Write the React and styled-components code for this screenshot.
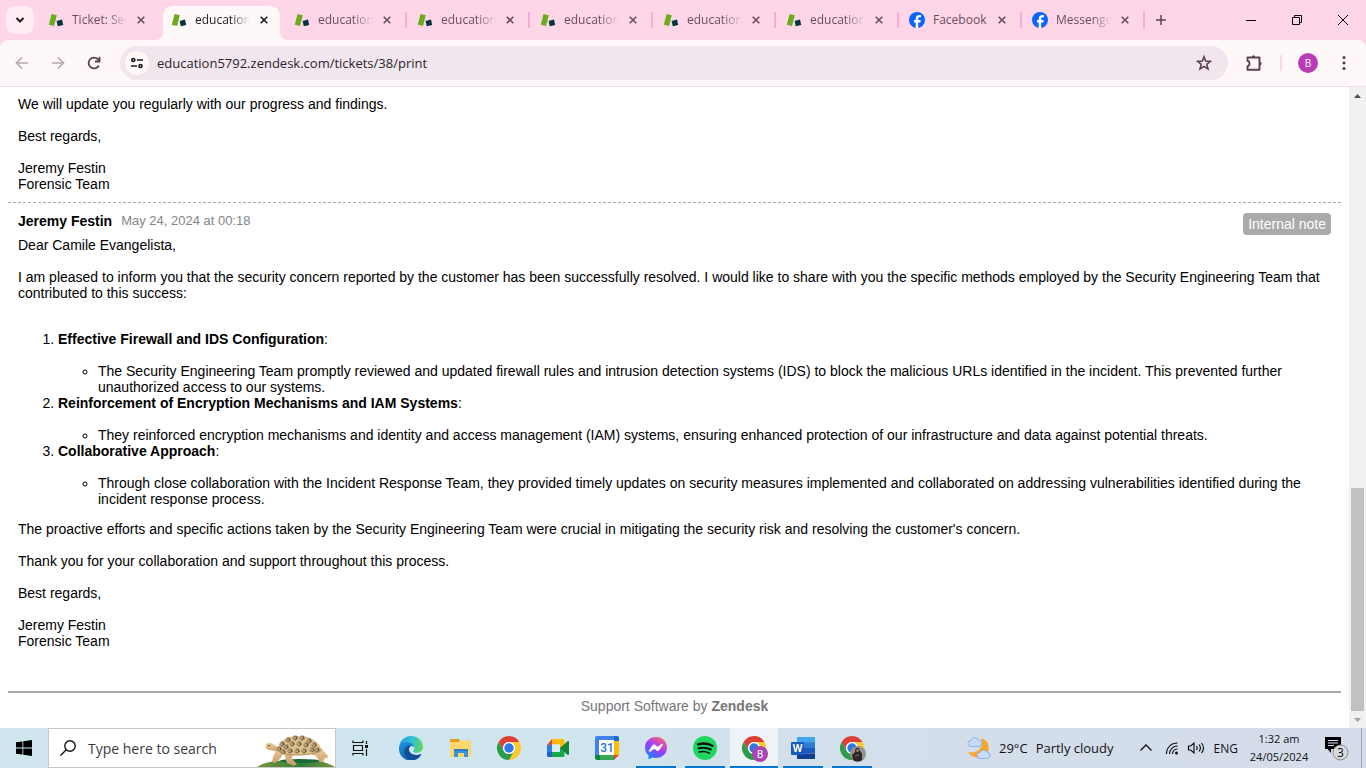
import React from "react";
import styled, { createGlobalStyle, css } from "styled-components";

const GlobalStyle = createGlobalStyle`
  *, *::before, *::after { box-sizing: border-box; }
  body { margin: 0; overflow: hidden; font-family: "Liberation Sans", Arial, sans-serif; }
  button { border: 0; padding: 0; background: none; font: inherit; color: inherit; }
  input { border: 0; padding: 0; background: none; outline: 0; min-width: 0; }
  a { color: inherit; text-decoration: none; }
  svg { display: block; flex: none; }
`;

const uiFont = css`
  font-family: "Open Sans", "Noto Sans", sans-serif;
`;

const Screen = styled.div`
  display: flex;
  flex-direction: column;
  height: 100vh;
  overflow: hidden;
  background: #fff;
`;

/* ---------- Tab strip ---------- */

const TabStrip = styled.header`
  ${uiFont}
  display: flex;
  flex: none;
  height: 40px;
  background: #ffd6e7;
  color: #5f4554;
`;

const TabSearch = styled.button`
  display: grid;
  place-items: center;
  flex: none;
  width: 28px;
  height: 28px;
  margin: 6px 4px 0 6px;
  border-radius: 9px;
  background: #ffebf4;
  color: #1f1a1d;
`;

const TabList = styled.nav`
  display: flex;
`;

const TabBox = styled.div`
  position: relative;
  display: flex;
  align-items: flex-start;
  flex: none;
  width: 123px;
  height: 34px;
  margin-top: 6px;
  padding-left: 10px;
  color: ${(p) => (p.$active ? "#1f1a1d" : "#6b4e5d")};

  ${(p) =>
    p.$divider &&
    css`
      &::after {
        content: "";
        position: absolute;
        right: 0;
        top: 6px;
        width: 2px;
        height: 16px;
        border-radius: 1px;
        background: #fba9d9;
      }
    `}
`;

const TabShape = styled.svg`
  position: absolute;
  left: -6px;
  top: 0;
`;

const TabContent = styled.a`
  position: relative;
  display: flex;
  align-items: center;
  gap: 8px;
  height: 28px;
`;

const TabTitle = styled.span`
  width: 55px;
  white-space: nowrap;
  font-size: 12px;
  line-height: 16px;
  mask-image: ${(p) => (p.$full ? "none" : "linear-gradient(90deg, #000 65%, transparent)")};
`;

const TabClose = styled.button`
  position: relative;
  display: grid;
  place-items: center;
  width: 16px;
  height: 28px;
  margin-left: 6px;
`;

const NewTab = styled.button`
  display: grid;
  place-items: center;
  width: 32px;
  height: 40px;
`;

const WindowControls = styled.div`
  display: flex;
  margin-left: auto;
  color: #000;
`;

const WindowButton = styled.button`
  display: grid;
  place-items: center;
  width: 46px;
  height: 40px;
`;

/* ---------- Toolbar ---------- */

const ToolbarBack = styled.div`
  ${uiFont}
  flex: none;
  background: #ffd6e7;
`;

const Toolbar = styled.div`
  display: flex;
  align-items: center;
  height: 47px;
  padding: 0 4px;
  border-bottom: 1px solid #f5dce8;
  border-radius: 8px 8px 0 0;
  background: #fff8f9;
  color: #5b4050;
`;

const ToolButton = styled.button`
  display: grid;
  place-items: center;
  flex: none;
  width: 36px;
  height: 34px;
  color: ${(p) => (p.$dim ? "#b4aaae" : "#5b4050")};
`;

const AddressBar = styled.div`
  display: flex;
  align-items: center;
  flex: 1;
  height: 34px;
  margin: 0 8px;
  padding: 0 6px 0 5px;
  border-radius: 17px;
  background: #f2e6ee;
`;

const SiteInfo = styled.button`
  display: grid;
  place-items: center;
  width: 24px;
  height: 24px;
  margin-right: 8px;
  border-radius: 50%;
  background: #fff8f9;
  color: #1f1a1d;
`;

const UrlInput = styled.input`
  ${uiFont}
  flex: 1;
  height: 24px;
  font-size: 13px;
  color: #2b2529;
`;

const ToolDivider = styled.span`
  width: 2px;
  height: 16px;
  margin: 0 8px;
  background: #ffd6e7;
`;

const Profile = styled.button`
  display: grid;
  place-items: center;
  width: 20px;
  height: 20px;
  margin: 0 8px;
  border-radius: 50%;
  background: #b83cb8;
  color: #fff;
  font-size: 10px;
  line-height: 20px;
`;

/* ---------- Page ---------- */

const Viewport = styled.div`
  display: flex;
  flex: 1;
  min-height: 0;
`;

const Page = styled.main`
  flex: 1;
  min-width: 0;
  overflow: hidden;
  padding: 0 8px;
  font-size: 14px;
  line-height: 16px;
  color: #000;
`;

const Comment = styled.article`
  padding: ${(p) => (p.$continued ? "9px 10px 10px" : "10px 10px 42px")};
  border-top: ${(p) => (p.$continued ? "0" : "1px dashed #aaa")};
`;

const CommentHead = styled.header`
  display: flex;
  align-items: flex-start;
  gap: 9px;
  height: 24px;
`;

const Author = styled.strong`
  font-weight: bold;
`;

const Stamp = styled.time`
  font-size: 13px;
  color: #858585;
`;

const NoteBadge = styled.span`
  margin-left: auto;
  padding: 3px 5px;
  border-radius: 4px;
  background: #aaa;
  color: #fff;
`;

const Para = styled.p`
  margin: 0 0 ${(p) => (p.$last ? "0" : "16px")};
`;

const Steps = styled.ol`
  margin: 30px 0 14px;
  padding-left: 40px;
`;

const StepTitle = styled.p`
  margin: 0 0 16px;
`;

const Details = styled.ul`
  margin: 0;
  padding-left: 40px;
  list-style: circle;
`;

const PageFooter = styled.footer`
  padding-top: 5px;
  border-top: 2px solid #aaa;
  text-align: center;
  color: #777;
`;

const ScrollTrack = styled.div`
  display: flex;
  flex-direction: column;
  justify-content: flex-end;
  flex: none;
  width: 17px;
  background: #f1f1f1;
`;

const ScrollArrow = styled.button`
  display: grid;
  place-items: center;
  width: 17px;
  height: 17px;
  color: ${(p) => (p.$dim ? "#a3a3a3" : "#505050")};
`;

const ScrollArea = styled.div`
  display: flex;
  flex-direction: column;
  justify-content: flex-end;
  flex: 1;
  padding: 0 2px;
`;

const ScrollThumb = styled.div`
  height: 223px;
  background: #c1c1c1;
`;

/* ---------- Taskbar ---------- */

const Taskbar = styled.footer`
  ${uiFont}
  display: flex;
  flex: none;
  height: 40px;
  background: linear-gradient(90deg, #cfe6ee 0%, #d0e6ee 38%, #d3dfeb 60%, #d5dcea 100%);
  color: #111;
`;

const TaskButton = styled.button`
  position: relative;
  display: grid;
  place-items: center;
  flex: none;
  width: 48px;
  height: 40px;
  background: ${(p) => (p.$active ? "#edf3f8" : "none")};

  ${(p) =>
    p.$open &&
    css`
      &::after {
        content: "";
        position: absolute;
        left: ${p.$active ? "0" : "4px"};
        right: ${p.$active ? "0" : "4px"};
        bottom: 0;
        height: 2px;
        background: #0078d7;
      }
    `}
`;

const SearchBox = styled.label`
  display: flex;
  align-items: center;
  width: 288px;
  height: 40px;
  padding-left: 11px;
  border: 1px solid #c8c8c8;
  background: #fff;
`;

const SearchInput = styled.input`
  ${uiFont}
  flex: 1;
  height: 30px;
  margin-left: 12px;
  font-size: 14px;
  &::placeholder { color: #3b3b3b; opacity: 1; }
`;

const AppRow = styled.div`
  display: flex;
  gap: 1px;
  margin-left: 3px;
`;

const Tray = styled.div`
  display: flex;
  align-items: center;
  margin-left: auto;
`;

const Weather = styled.button`
  display: flex;
  align-items: center;
  gap: 8px;
  margin-right: 26px;
  font-size: 13px;
  white-space: nowrap;
`;

const TrayButton = styled.button`
  display: grid;
  place-items: center;
  height: 40px;
  margin-right: ${(p) => p.$gap || 8}px;
  font-size: 12px;
`;

const Clock = styled.time`
  width: 64px;
  margin-right: 14px;
  font-size: 11px;
  line-height: 18px;
  text-align: center;
  white-space: nowrap;
`;

const ShowDesktop = styled.button`
  width: 5px;
  height: 40px;
  border-left: 1px solid #9aa5b5;
`;

/* ---------- Icons ---------- */

const Line = ({ size = 16, w = 2, children, ...rest }) => (
  <svg width={size} height={size} viewBox={`0 0 ${size} ${size}`} fill="none" stroke="currentColor" strokeWidth={w} {...rest}>
    {children}
  </svg>
);

const ZendeskTabIcon = () => (
  <svg width="16" height="16" viewBox="0 0 16 16">
    <path d="M3.600 2 8.800 3.200 6 14 .8 12.800z" fill="#6cab1c" />
    <path d="m8.600 8.900 5.400-1.300 1.200 5.400-5.400 1.200z" fill="#03363d" />
  </svg>
);

const FacebookIcon = () => (
  <svg width="16" height="16" viewBox="0 0 16 16">
    <circle cx="8" cy="8" r="8" fill="#0866ff" />
    <path d="M6.700 15.900v-5.400H5V8h1.700V6.900c0-2.800 1.300-4 3.900-4 .5 0 1.100.1 1.400.2v2.200h-1.200c-1.200 0-1.600.5-1.600 1.700V8h2.500l-.4 2.500H9.200v5.400a8 8 0 0 1-2.500 0z" fill="#fff" />
  </svg>
);

const Chrome = ({ children }) => (
  <svg width="28" height="28" viewBox="-2 -2 28 28">
    <path d="M12 6H22.400A12 12 0 0 0 1.600 6L6.800 15A6 6 0 0 1 12 6z" fill="#dd4135" />
    <path d="M12 6H22.400A12 12 0 0 0 1.600 6L6.800 15A6 6 0 0 1 12 6z" fill="#fcc82c" transform="rotate(120 12 12)" />
    <path d="M12 6H22.400A12 12 0 0 0 1.600 6L6.800 15A6 6 0 0 1 12 6z" fill="#2d9b49" transform="rotate(240 12 12)" />
    <circle cx="12" cy="12" r="6" fill="#fff" />
    <circle cx="12" cy="12" r="4.700" fill="#2a79e8" />
    {children}
  </svg>
);

const EdgeIcon = () => (
  <svg width="24" height="24" viewBox="0 0 24 24">
    <defs>
      <linearGradient id="edgeTop" x1="0" y1="0.4" x2="1" y2="0.5">
        <stop offset="0" stopColor="#1c9be0" />
        <stop offset="0.5" stopColor="#2fc0dc" />
        <stop offset="1" stopColor="#63d858" />
      </linearGradient>
      <linearGradient id="edgeLow" x1="0" y1="0" x2="0.4" y2="1">
        <stop offset="0" stopColor="#1a93e0" />
        <stop offset="1" stopColor="#0b63b8" />
      </linearGradient>
    </defs>
    <path d="M.3 10C1.300 4.300 6.200 0 12 0c6.800 0 12 5 12 10.500 0 4-3 6.300-6.500 6.300-2.800 0-3.700-1-3.300-1.800.6-1 1.300-1.500 1.300-3C15.500 9 12.500 6.500 8.500 6.500 4.500 6.500 1.500 8 .3 10z" fill="url(#edgeTop)" />
    <path d="M0 12c0-4 4-6 8-6 4.500 0 7.500 3 7.500 6 0-1.200-1.500-2-3-2-2.500 0-4 2-4 4.500 0 4 3.500 6.500 7.500 6.500 2.500 0 4.500-.6 6-1.600A12 12 0 0 1 0 12z" fill="url(#edgeLow)" />
    <path d="M9 9.500C6 11.500 5 14 5 16.500c0 3.500 3 6.700 7 7.500 4.300 0 8-2.300 10.300-5.300.3-.6-.3-1-.8-.7-1.200.6-2.500.9-4 .9-4.500 0-7.500-2.600-7.500-5.400 0-1.500.8-3 2-3.800z" fill="#124f9b" />
  </svg>
);

const FolderIcon = () => (
  <svg width="24" height="24" viewBox="0 0 24 24">
    <path d="M2 4c0-.6.4-1 1-1h7.500c.6 0 1 .4 1 1v3H2z" fill="#e0a01b" />
    <path d="M2 6h9.500l1.500-1.500h9c.6 0 1 .4 1 1V20c0 .6-.4 1-1 1H3c-.6 0-1-.4-1-1z" fill="#fdd76d" />
    <path d="M6 21v-8h14v8h-4v-4h-6v4z" fill="#3a93d8" />
    <path d="M6 13h14v2H6z" fill="#2a7fc4" />
  </svg>
);

const MeetIcon = () => (
  <svg width="24" height="24" viewBox="0 0 24 24">
    <path d="M6 3v6H1z" fill="#e94335" />
    <path d="M6 3h11a1.500 1.500 0 0 1 1.500 1.500V12h-4.500V8.500H6z" fill="#fcbc05" />
    <path d="M1 9h5v7H1z" fill="#2a7de8" />
    <path d="M1 16h5v5H2.500A1.500 1.500 0 0 1 1 19.500z" fill="#1a62cf" />
    <path d="M6 16h8v-4h4.500v7.500A1.500 1.500 0 0 1 17 21H6z" fill="#17a94c" />
    <path d="m14 12 7.500-6.800c.6-.5 1.500-.1 1.500.7v12.200c0 .8-.9 1.200-1.500.7z" fill="#15833a" />
    <path d="M6 8.500h8V16H6z" fill="#d8eef5" />
  </svg>
);

const CalendarIcon = () => (
  <svg width="24" height="24" viewBox="0 0 24 24">
    <path d="M0 2a2 2 0 0 1 2-2h17v5H5v14H0z" fill="#3f82ee" />
    <path d="M19 0h3a2 2 0 0 1 2 2v3h-5z" fill="#1f67d2" />
    <path d="M19 5h5v14h-5z" fill="#fbbc04" />
    <path d="M5 19h14v5H5z" fill="#34a853" />
    <path d="M0 19h5v5H2a2 2 0 0 1-2-2z" fill="#188038" />
    <path d="M19 19h5l-5 5z" fill="#ea4335" />
    <path d="M4 4h15v15H4z" fill="#fff" />
    <text x="12" y="16" textAnchor="middle" fontFamily="Roboto, sans-serif" fontSize="12" fontWeight="500" fill="#2b6fdb">31</text>
  </svg>
);

const MessengerIcon = () => (
  <svg width="24" height="24" viewBox="0 0 24 24">
    <defs>
      <linearGradient id="msgr" x1="0.2" y1="1" x2="0.8" y2="0">
        <stop offset="0" stopColor="#0a8dff" />
        <stop offset="0.5" stopColor="#9a3cff" />
        <stop offset="1" stopColor="#ff6475" />
      </linearGradient>
    </defs>
    <path d="M12 1C5.700 1 1 5.600 1 11.500c0 3.200 1.300 5.900 3.500 7.800V23.500l3.700-2c1.200.4 2.500.5 3.800.5 6.300 0 11-4.600 11-10.500S18.300 1 12 1z" fill="url(#msgr)" />
    <path d="m5.200 14.700 3.400-5.300c.5-.8 1.600-1 2.400-.4l2.600 2 4.200-2.800c.5-.3 1 .2.7.7L15.200 14c-.5.800-1.600 1-2.400.5l-2.600-2-4.200 3c-.5.300-1.100-.3-.8-.8z" fill="#fff" stroke="#fff" strokeWidth=".6" />
  </svg>
);

const SpotifyIcon = () => (
  <svg width="24" height="24" viewBox="0 0 24 24" fill="none" stroke="#101010" strokeLinecap="round">
    <circle cx="12" cy="12" r="12" fill="#1ed760" stroke="none" />
    <path d="M5 8.400c5-1.400 10-1 14.300 1.300" strokeWidth="2.400" />
    <path d="M5.600 12.300c4.300-1.200 8.300-.8 12.200 1.200" strokeWidth="2" />
    <path d="M6.200 16c3.500-.9 6.900-.5 10 1.100" strokeWidth="1.700" />
  </svg>
);

const WordIcon = () => (
  <svg width="24" height="24" viewBox="0 0 24 24">
    <path d="M6 1h18v6H6z" fill="#41a5ee" />
    <path d="M6 6.500h18V12H6z" fill="#2b7cd3" />
    <path d="M6 12h18v5.500H6z" fill="#185abd" />
    <path d="M6 17.500h18V23H6z" fill="#103f91" />
    <rect y="6" width="13" height="13" rx="1" fill="#185abd" />
    <text x="6.500" y="16.200" textAnchor="middle" fontFamily="Open Sans, sans-serif" fontSize="10" fontWeight="700" fill="#fff">W</text>
  </svg>
);

const shellSpots = [
  [25, 15], [31, 11], [38, 9], [45, 9], [52, 12], [57, 16], [22, 20], [29, 18], [35, 15],
  [42, 15], [49, 16], [55, 21], [26, 23], [33, 22], [40, 22], [47, 22], [60, 21],
];

const TortoiseArt = () => (
  <svg width="78" height="38" viewBox="0 0 78 38">
    <defs>
      <linearGradient id="hill" x1="0" x2="1">
        <stop offset="0" stopColor="#7d9440" />
        <stop offset="0.55" stopColor="#2c7f37" />
        <stop offset="1" stopColor="#7d9140" />
      </linearGradient>
      <linearGradient id="skin" x2="0" y2="1">
        <stop offset="0" stopColor="#edcd9d" />
        <stop offset="1" stopColor="#c9965f" />
      </linearGradient>
    </defs>
    <path d="M0 38c7-5 19-7 41-7s31 3 37 7z" fill="url(#hill)" />
    <ellipse cx="43" cy="32" rx="20" ry="2" fill="#176b38" />
    <path d="M21 18c-3-1-4-3-7-4-5-1-7 3-4 6 3 2 6 1 8 2s3 2 5 2z" fill="url(#skin)" />
    <path d="M19 21h9l-5 9-5 4-3-1 1-5zM27 24h9l-1 6 5 5-3 2-7-3zM52 24l11-4 5 9-2 4h-3l-4-6zM64 19l7 8-1 3-4-3z" fill="url(#skin)" />
    <path d="M21 20c2-9 9-13 20-13 13 0 20 5 24 14-6 4-15 5-24 5s-16-1-20-6z" fill="#ddc190" />
    {shellSpots.map(([x, y]) => (
      <g key={`${x}-${y}`} transform={`translate(${x} ${y})`}>
        <path d="M-2.600 0-1-2.500 2-2.200 2.800.8.800 2.500-1.800 2z" fill="#7c6344" />
        <path d="M-1-2v4M-2 0h4M1.500-2 0 0l2 2" stroke="#ddc08c" strokeWidth=".7" />
      </g>
    ))}
    <path d="M21 20c4 6 12 6 20 6s18-1 24-5" fill="none" stroke="#b78d57" strokeWidth="1" />
    <circle cx="12" cy="16.500" r=".8" fill="#503720" />
  </svg>
);

const WeatherIcon = () => (
  <svg width="24" height="24" viewBox="0 0 24 24">
    <path d="M14 2c5 1.500 8.500 5.500 7.500 11.500C20.500 19 15 22.500 9 21.500 4 20.500 2 18 1 15.500c5 2 10 .5 12.500-3.500 2-3 2-6.500.5-10z" fill="#f9a72b" />
    <path d="M4 10.500a3 3 0 0 1 0-6 4 4 0 0 1 7.500-.5 3.200 3.200 0 0 1 .5 6.500z" fill="#c6daf8" stroke="#7fa4e0" strokeWidth=".8" />
    <path d="M13 22.500a3 3 0 0 1 0-6 3.800 3.800 0 0 1 7-.3 3.200 3.200 0 0 1 .7 6.300z" fill="#c9dcf9" stroke="#7fa4e0" strokeWidth=".8" />
  </svg>
);

const TinyCross = () => (
  <Line size={8} w={1.600}><path d="m.7.7 6.600 6.600m0-6.600L.7 7.300" /></Line>
);

/* ---------- Data ---------- */

const tabs = [
  { title: "Ticket: Sec" },
  { title: "education", active: true },
  { title: "education", divider: true },
  { title: "education", divider: true },
  { title: "education", divider: true },
  { title: "education", divider: true },
  { title: "education", divider: true },
  { title: "Facebook", facebook: true, full: true, divider: true },
  { title: "Messenge", facebook: true, divider: true },
];

const steps = [
  {
    title: "Effective Firewall and IDS Configuration",
    text: "The Security Engineering Team promptly reviewed and updated firewall rules and intrusion detection systems (IDS) to block the malicious URLs identified in the incident. This prevented further unauthorized access to our systems.",
  },
  {
    title: "Reinforcement of Encryption Mechanisms and IAM Systems",
    text: "They reinforced encryption mechanisms and identity and access management (IAM) systems, ensuring enhanced protection of our infrastructure and data against potential threats.",
  },
  {
    title: "Collaborative Approach",
    text: "Through close collaboration with the Incident Response Team, they provided timely updates on security measures implemented and collaborated on addressing vulnerabilities identified during the incident response process.",
  },
];

const apps = [
  { name: "Microsoft Edge", icon: <EdgeIcon /> },
  { name: "File Explorer", icon: <FolderIcon /> },
  { name: "Google Chrome", icon: <Chrome /> },
  { name: "Google Meet", icon: <MeetIcon /> },
  { name: "Google Calendar", icon: <CalendarIcon /> },
  { name: "Messenger", icon: <MessengerIcon />, open: true },
  { name: "Spotify", icon: <SpotifyIcon />, open: true },
  {
    name: "Google Chrome, profile B",
    open: true,
    active: true,
    icon: (
      <Chrome>
        <circle cx="18" cy="18" r="8" fill="#a745b5" />
        <text x="18" y="21.500" textAnchor="middle" fontFamily="Roboto, sans-serif" fontSize="10" fill="#fff">B</text>
      </Chrome>
    ),
  },
  { name: "Word", icon: <WordIcon />, open: true },
  {
    name: "Google Chrome, second profile",
    open: true,
    icon: (
      <Chrome>
        <circle cx="18" cy="18" r="8" fill="#96958d" />
        <path d="M15.500 12.500c2-1.500 4-.5 4 1.500l2.500 4v6c-3 2-6 2-9 0l-1-5 3-3z" fill="#2c2728" />
        <circle cx="17.500" cy="14.500" r="1.500" fill="#a07a66" />
        <path d="m15 20 4-1" stroke="#8a4b42" strokeWidth="1.500" />
      </Chrome>
    ),
  },
];

/* ---------- Sections ---------- */

function Tab({ title, active, facebook, full, divider }) {
  return (
    <TabBox $active={active} $divider={divider}>
      {active && (
        <TabShape width="133" height="34" viewBox="0 0 133 34" aria-hidden="true">
          <path d="M0 34c5 0 8-3 8-8V10C8 4 12 0 18 0h97c6 0 10 4 10 10v16c0 5 3 8 8 8z" fill="#fff8f9" />
        </TabShape>
      )}
      <TabContent href="#">
        {facebook ? <FacebookIcon /> : <ZendeskTabIcon />}
        <TabTitle $full={full}>{title}</TabTitle>
      </TabContent>
      <TabClose aria-label={`Close ${title}`}>
        <TinyCross />
      </TabClose>
    </TabBox>
  );
}

function BrowserTabs() {
  return (
    <TabStrip>
      <TabSearch aria-label="Search tabs">
        <Line size={10}><path d="m1.500 3 3.500 3.500L8.500 3" /></Line>
      </TabSearch>
      <TabList aria-label="Tabs">
        {tabs.map((tab, i) => <Tab key={i} {...tab} />)}
      </TabList>
      <NewTab aria-label="New tab">
        <Line size={12}><path d="M6 1v10M1 6h10" strokeWidth="1.500" /></Line>
      </NewTab>
      <WindowControls>
        <WindowButton aria-label="Minimize"><Line size={10} w={1}><path d="M0 5.500h10" /></Line></WindowButton>
        <WindowButton aria-label="Restore"><Line size={10} w={1}><path d="M.5 2.500h7v7h-7zM2.500 2.500v-2h7v7h-2" /></Line></WindowButton>
        <WindowButton aria-label="Close"><Line size={10} w={1}><path d="m0 0 10 10M10 0 0 10" /></Line></WindowButton>
      </WindowControls>
    </TabStrip>
  );
}

function BrowserToolbar() {
  return (
    <ToolbarBack>
      <Toolbar>
        <ToolButton $dim aria-label="Back"><Line w={1.700}><path d="M14 8H3m5-5.500L2.500 8 8 13.500" /></Line></ToolButton>
        <ToolButton $dim aria-label="Forward"><Line w={1.700}><path d="M2 8h11M8 2.500 13.500 8 8 13.500" /></Line></ToolButton>
        <ToolButton aria-label="Reload"><Line w={1.800}><path d="M12.800 10.500A5.400 5.400 0 1 1 12 4.400l1.500 1.700M13.500 1.800v4.700H9" /></Line></ToolButton>
        <AddressBar>
          <SiteInfo aria-label="Site information">
            <Line size={14} w={1.700}><circle cx="3.300" cy="4" r="1.500" /><path d="M6.800 4H13M1 10h6" /><circle cx="10.500" cy="10" r="1.500" /></Line>
          </SiteInfo>
          <UrlInput aria-label="Address" defaultValue="education5792.zendesk.com/tickets/38/print" />
          <ToolButton aria-label="Bookmark this page">
            <Line w={1.600}><path d="m8 1.800 1.700 4.300 4.700.3-3.600 3 1.200 4.500L8 11.400l-4 2.500 1.200-4.500-3.600-3 4.700-.3z" /></Line>
          </ToolButton>
        </AddressBar>
        <ToolButton aria-label="Extensions">
          <Line size={18} w={1.900}>
            <path d="M2.500 3.500h12v12.200h-12v-3.500c2.700-.3 2.700-5 0-5.300z" strokeLinejoin="round" />
            <path d="M6.800 3a1.700 1.700 0 0 1 3.400 0zM15 7.900a1.700 1.700 0 0 1 0 3.400z" fill="currentColor" stroke="none" />
          </Line>
        </ToolButton>
        <ToolDivider />
        <Profile aria-label="Profile">B</Profile>
        <ToolButton aria-label="Menu">
          <Line><g fill="currentColor" stroke="none"><circle cx="8" cy="2.500" r="1.600" /><circle cx="8" cy="8" r="1.600" /><circle cx="8" cy="13.500" r="1.600" /></g></Line>
        </ToolButton>
      </Toolbar>
    </ToolbarBack>
  );
}

function TicketPage() {
  return (
    <Page>
      <Comment $continued>
        <Para>We will update you regularly with our progress and findings.</Para>
        <Para>Best regards,</Para>
        <Para $last>Jeremy Festin<br />Forensic Team</Para>
      </Comment>
      <Comment>
        <CommentHead>
          <Author>Jeremy Festin</Author>
          <Stamp dateTime="2024-05-24T00:18">May 24, 2024 at 00:18</Stamp>
          <NoteBadge>Internal note</NoteBadge>
        </CommentHead>
        <Para>Dear Camile Evangelista,</Para>
        <Para $last>
          I am pleased to inform you that the security concern reported by the customer has been successfully resolved. I would like to share with you the specific methods employed by the Security Engineering Team that contributed to this success:
        </Para>
        <Steps>
          {steps.map((step) => (
            <li key={step.title}>
              <StepTitle><b>{step.title}</b>:</StepTitle>
              <Details><li>{step.text}</li></Details>
            </li>
          ))}
        </Steps>
        <Para>The proactive efforts and specific actions taken by the Security Engineering Team were crucial in mitigating the security risk and resolving the customer's concern.</Para>
        <Para>Thank you for your collaboration and support throughout this process.</Para>
        <Para>Best regards,</Para>
        <Para $last>Jeremy Festin<br />Forensic Team</Para>
      </Comment>
      <PageFooter>Support Software by <a href="#"><b>Zendesk</b></a></PageFooter>
    </Page>
  );
}

function Scrollbar() {
  return (
    <ScrollTrack>
      <ScrollArrow aria-label="Scroll up"><svg width="7" height="4" viewBox="0 0 7 4"><path d="M0 4 3.500 0 7 4z" fill="currentColor" /></svg></ScrollArrow>
      <ScrollArea><ScrollThumb /></ScrollArea>
      <ScrollArrow $dim aria-label="Scroll down"><svg width="7" height="4" viewBox="0 0 7 4"><path d="M0 0 3.500 4 7 0z" fill="currentColor" /></svg></ScrollArrow>
    </ScrollTrack>
  );
}

function WindowsTaskbar() {
  return (
    <Taskbar>
      <TaskButton aria-label="Start">
        <svg width="16" height="16" viewBox="0 0 16 16"><path d="M0 2.300 6.500 1.400v6.200H0zM7.300 1.300 16 0v7.600H7.300zM0 8.400h6.500v6.200L0 13.700zM7.300 8.400H16V16l-8.700-1.200z" /></svg>
      </TaskButton>
      <SearchBox>
        <Line w={1.400}><circle cx="10" cy="6" r="5.200" /><path d="M6.300 9.700.5 15.500" /></Line>
        <SearchInput aria-label="Search" placeholder="Type here to search" />
        <TortoiseArt />
      </SearchBox>
      <TaskButton aria-label="Task view">
        <Line w={1}>
          <path d="M1 .5v2h10v-2M1.500 5.500h9v5h-9zM1 15.500v-2h10v2M14.500 1v3M14.500 9v7" strokeWidth="1.200" />
          <path d="M13 5h3v3h-3z" fill="currentColor" stroke="none" />
        </Line>
      </TaskButton>
      <AppRow>
        {apps.map((app) => (
          <TaskButton key={app.name} aria-label={app.name} $open={app.open} $active={app.active}>{app.icon}</TaskButton>
        ))}
      </AppRow>
      <Tray>
        <Weather><WeatherIcon /><span>29°C</span><span>Partly cloudy</span></Weather>
        <TrayButton aria-label="Show hidden icons" $gap={13}><Line size={12} w={1.300}><path d="M.5 8.500 6 3l5.500 5.500" /></Line></TrayButton>
        <TrayButton aria-label="Network">
          <Line size={14} w={1.100}>
            <path d="M1.500 13C1.500 6.500 6 2 12.500 2M4.500 13C4.500 8.500 8 5 12.500 5M7.500 13c0-3 2-5 5-5" />
            <circle cx="11.500" cy="12" r="1.500" fill="currentColor" stroke="none" />
          </Line>
        </TrayButton>
        <TrayButton aria-label="Volume" $gap={9}>
          <Line size={18} w={1.200}><path d="M1.500 7h2.200L7 4v10l-3.300-3H1.500zM9.500 7c.8 1.200.8 2.800 0 4M12 5.500c1.600 2 1.600 5 0 7M14.500 4c2.400 3 2.400 7 0 10" /></Line>
        </TrayButton>
        <TrayButton $gap={9}>ENG</TrayButton>
        <Clock dateTime="2024-05-24T01:32">1:32 am<br />24/05/2024</Clock>
        <TrayButton aria-label="3 notifications" $gap={12}>
          <svg width="24" height="26" viewBox="0 0 24 26">
            <path d="M0 2h16v12H6v4l-3.500-4H0z" fill="#000" />
            <path d="M3 5.500h10M3 8h10M3 10.500h6" stroke="#d5dcea" />
            <circle cx="15.500" cy="17.500" r="7.500" fill="#d9dadd" stroke="#85888e" />
            <text x="15.500" y="21.500" textAnchor="middle" fontFamily="Open Sans, sans-serif" fontSize="12" fill="#111">3</text>
          </svg>
        </TrayButton>
        <ShowDesktop aria-label="Show desktop" />
      </Tray>
    </Taskbar>
  );
}

export default function App() {
  return (
    <Screen>
      <GlobalStyle />
      <BrowserTabs />
      <BrowserToolbar />
      <Viewport>
        <TicketPage />
        <Scrollbar />
      </Viewport>
      <WindowsTaskbar />
    </Screen>
  );
}
